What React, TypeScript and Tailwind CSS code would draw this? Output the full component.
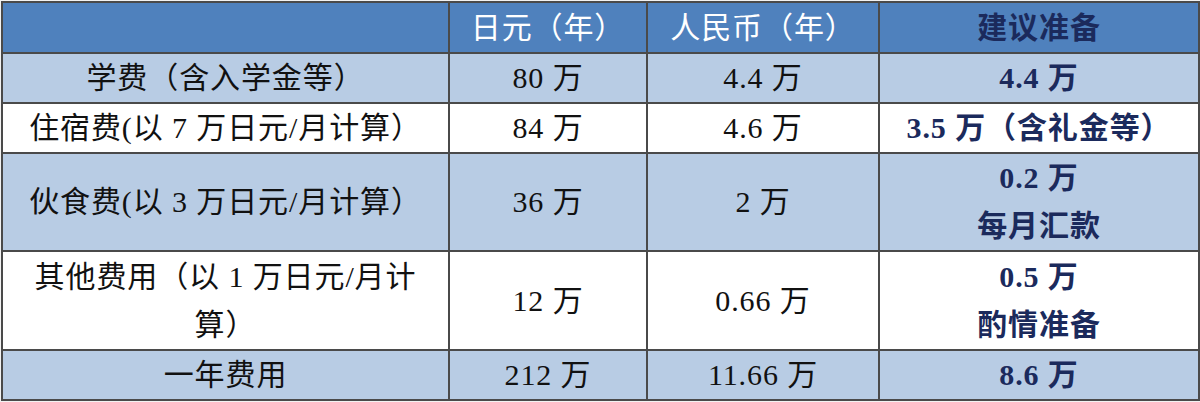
const rows = [
  { label: "学费（含入学金等）", jpy: "80 万", cny: "4.4 万", plan: ["4.4 万"], shade: true, h: "h-[50px]" },
  { label: "住宿费(以 7 万日元/月计算）", jpy: "84 万", cny: "4.6 万", plan: ["3.5 万（含礼金等）"], shade: false, h: "h-[50px]" },
  { label: "伙食费(以 3 万日元/月计算）", jpy: "36 万", cny: "2 万", plan: ["0.2 万", "每月汇款"], shade: true, h: "h-[98px]" },
  { label: "其他费用（以 1 万日元/月计\n算）", jpy: "12 万", cny: "0.66 万", plan: ["0.5 万", "酌情准备"], shade: false, h: "h-[99px]" },
  { label: "一年费用", jpy: "212 万", cny: "11.66 万", plan: ["8.6 万"], shade: true, h: "h-[50px]" },
];

const cell = "border-2 border-[#4a4a4a] text-center align-middle p-0 leading-[48px]";

export default function App() {
  return (
    <div
      className="w-[1200px] h-[402px] bg-[#f2f2f2] pt-px pl-px overflow-hidden"
      style={{ fontFamily: '"Liberation Serif", "Noto Sans CJK SC", serif' }}
    >
      <table className="border-collapse table-fixed w-[1197px] text-[30px] tracking-[0.03em] text-[#111]">
        <colgroup>
          <col className="w-[447px]" />
          <col className="w-[198px]" />
          <col className="w-[232px]" />
          <col className="w-[320px]" />
        </colgroup>
        <thead>
          <tr className="h-[51px] bg-[#4f81bd]">
            <th className={cell}></th>
            <th className={`${cell} font-normal text-white`}>日元（年）</th>
            <th className={`${cell} font-normal text-white`}>人民币（年）</th>
            <th className={`${cell} font-bold text-[#1b2a5c]`}>建议准备</th>
          </tr>
        </thead>
        <tbody>
          {rows.map((r, i) => (
            <tr key={i} className={`${r.h} ${r.shade ? "bg-[#b8cce4]" : "bg-white"}`}>
              <td className={`${cell} px-2 whitespace-pre-line`}>{r.label}</td>
              <td className={cell}>{r.jpy}</td>
              <td className={cell}>{r.cny}</td>
              <td className={`${cell} font-bold text-[#1b2a5c]`}>
                {r.plan.map((p, j) => (
                  <div key={j}>{p}</div>
                ))}
              </td>
            </tr>
          ))}
        </tbody>
      </table>
    </div>
  );
}
